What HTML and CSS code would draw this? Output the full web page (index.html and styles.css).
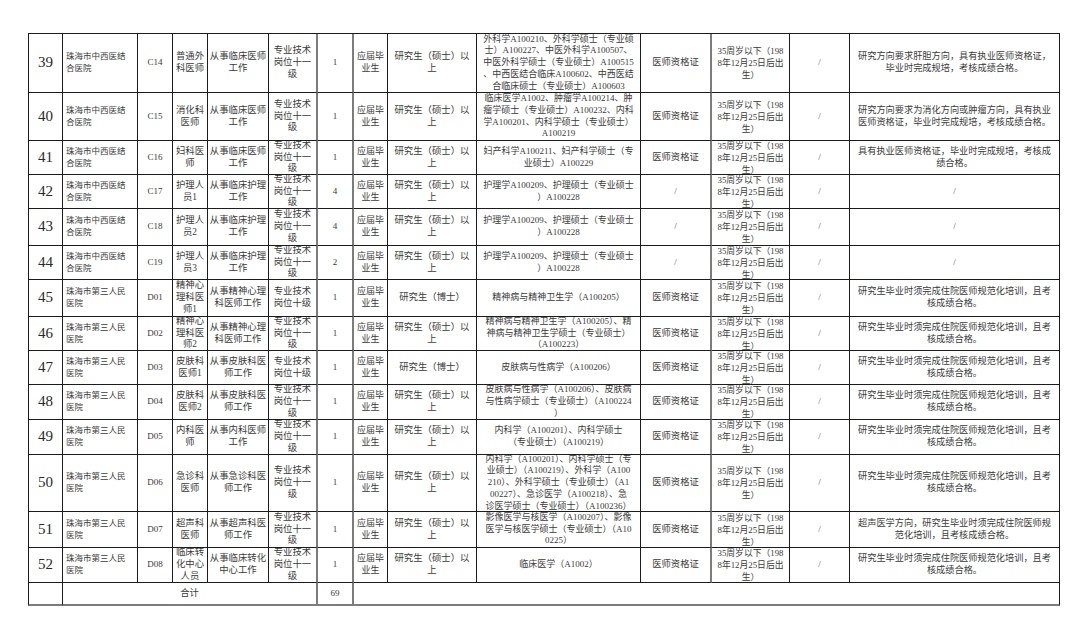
FILE: index.html
```html
<!DOCTYPE html>
<html lang="zh-CN">
<head>
<meta charset="utf-8">
<title>岗位表</title>
<link rel="stylesheet" href="styles.css">
</head>
<body>
<div class="sheet">
  <!-- 39 -->
  <div class="c n first">39</div>
  <div class="c u"><span>珠海市中西医结<br>合医院</span></div>
  <div class="c code">C14</div>
  <div class="c job"><span>普通外<br>科医师</span></div>
  <div class="c desc"><span>从事临床医师<br>工作</span></div>
  <div class="c post gr"><span>专业技术<br>岗位十一<br>级</span></div>
  <div class="c cnt gr">1</div>
  <div class="c grad"><span>应届毕<br>业生</span></div>
  <div class="c edu"><span>研究生（硕士）以<br>上</span></div>
  <div class="c m"><span>外科学A100210、外科学硕士（专业硕<br>士）A100227、中医外科学A100507、<br>中医外科学硕士（专业硕士）A100515<br>、中西医结合临床A100602、中西医结<br>合临床硕士（专业硕士）A100603</span></div>
  <div class="c cert gr">医师资格证</div>
  <div class="c age"><span>35周岁以下（198<br>8年12月25日后出<br>生）</span></div>
  <div class="c sl">/</div>
  <div class="c rm"><span>研究方向要求肝胆方向，具有执业医师资格证，<br>毕业时完成规培，考核成绩合格。</span></div>

  <!-- 40 -->
  <div class="c n first">40</div>
  <div class="c u"><span>珠海市中西医结<br>合医院</span></div>
  <div class="c code">C15</div>
  <div class="c job"><span>消化科<br>医师</span></div>
  <div class="c desc"><span>从事临床医师<br>工作</span></div>
  <div class="c post gr"><span>专业技术<br>岗位十一<br>级</span></div>
  <div class="c cnt gr">1</div>
  <div class="c grad"><span>应届毕<br>业生</span></div>
  <div class="c edu"><span>研究生（硕士）以<br>上</span></div>
  <div class="c m"><span>临床医学A1002、肿瘤学A100214、肿<br>瘤学硕士（专业硕士）A100232、内科<br>学A100201、内科学硕士（专业硕士）<br>A100219</span></div>
  <div class="c cert gr">医师资格证</div>
  <div class="c age"><span>35周岁以下（198<br>8年12月25日后出<br>生）</span></div>
  <div class="c sl">/</div>
  <div class="c rm"><span>研究方向要求为消化方向或肿瘤方向，具有执业<br>医师资格证，毕业时完成规培，考核成绩合格。</span></div>

  <!-- 41 -->
  <div class="c n first">41</div>
  <div class="c u"><span>珠海市中西医结<br>合医院</span></div>
  <div class="c code">C16</div>
  <div class="c job"><span>妇科医<br>师</span></div>
  <div class="c desc"><span>从事临床医师<br>工作</span></div>
  <div class="c post gr"><span>专业技术<br>岗位十一<br>级</span></div>
  <div class="c cnt gr">1</div>
  <div class="c grad"><span>应届毕<br>业生</span></div>
  <div class="c edu"><span>研究生（硕士）以<br>上</span></div>
  <div class="c m"><span>妇产科学A100211、妇产科学硕士（专<br>业硕士）A100229</span></div>
  <div class="c cert gr">医师资格证</div>
  <div class="c age"><span>35周岁以下（198<br>8年12月25日后出<br>生）</span></div>
  <div class="c sl">/</div>
  <div class="c rm"><span>具有执业医师资格证，毕业时完成规培，考核成<br>绩合格。</span></div>

  <!-- 42 -->
  <div class="c n first">42</div>
  <div class="c u"><span>珠海市中西医结<br>合医院</span></div>
  <div class="c code">C17</div>
  <div class="c job"><span>护理人<br>员1</span></div>
  <div class="c desc"><span>从事临床护理<br>工作</span></div>
  <div class="c post gr"><span>专业技术<br>岗位十一<br>级</span></div>
  <div class="c cnt gr">4</div>
  <div class="c grad"><span>应届毕<br>业生</span></div>
  <div class="c edu"><span>研究生（硕士）以<br>上</span></div>
  <div class="c m"><span>护理学A100209、护理硕士（专业硕士<br>）A100228</span></div>
  <div class="c cert sl gr">/</div>
  <div class="c age"><span>35周岁以下（198<br>8年12月25日后出<br>生）</span></div>
  <div class="c sl">/</div>
  <div class="c sl">/</div>

  <!-- 43 -->
  <div class="c n first">43</div>
  <div class="c u"><span>珠海市中西医结<br>合医院</span></div>
  <div class="c code">C18</div>
  <div class="c job"><span>护理人<br>员2</span></div>
  <div class="c desc"><span>从事临床护理<br>工作</span></div>
  <div class="c post gr"><span>专业技术<br>岗位十一<br>级</span></div>
  <div class="c cnt gr">4</div>
  <div class="c grad"><span>应届毕<br>业生</span></div>
  <div class="c edu"><span>研究生（硕士）以<br>上</span></div>
  <div class="c m"><span>护理学A100209、护理硕士（专业硕士<br>）A100228</span></div>
  <div class="c cert sl gr">/</div>
  <div class="c age"><span>35周岁以下（198<br>8年12月25日后出<br>生）</span></div>
  <div class="c sl">/</div>
  <div class="c sl">/</div>

  <!-- 44 -->
  <div class="c n first">44</div>
  <div class="c u"><span>珠海市中西医结<br>合医院</span></div>
  <div class="c code">C19</div>
  <div class="c job"><span>护理人<br>员3</span></div>
  <div class="c desc"><span>从事临床护理<br>工作</span></div>
  <div class="c post gr"><span>专业技术<br>岗位十一<br>级</span></div>
  <div class="c cnt gr">2</div>
  <div class="c grad"><span>应届毕<br>业生</span></div>
  <div class="c edu"><span>研究生（硕士）以<br>上</span></div>
  <div class="c m"><span>护理学A100209、护理硕士（专业硕士<br>）A100228</span></div>
  <div class="c cert sl gr">/</div>
  <div class="c age"><span>35周岁以下（198<br>8年12月25日后出<br>生）</span></div>
  <div class="c sl">/</div>
  <div class="c sl">/</div>

  <!-- 45 -->
  <div class="c n first">45</div>
  <div class="c u"><span>珠海市第三人民<br>医院</span></div>
  <div class="c code">D01</div>
  <div class="c job"><span>精神心<br>理科医<br>师1</span></div>
  <div class="c desc"><span>从事精神心理<br>科医师工作</span></div>
  <div class="c post gr"><span>专业技术<br>岗位十级</span></div>
  <div class="c cnt gr">1</div>
  <div class="c grad"><span>应届毕<br>业生</span></div>
  <div class="c edu">研究生（博士）</div>
  <div class="c m">精神病与精神卫生学（A100205）</div>
  <div class="c cert gr">医师资格证</div>
  <div class="c age"><span>35周岁以下（198<br>8年12月25日后出<br>生）</span></div>
  <div class="c sl">/</div>
  <div class="c rm"><span>研究生毕业时须完成住院医师规范化培训，且考<br>核成绩合格。</span></div>

  <!-- 46 -->
  <div class="c n first">46</div>
  <div class="c u"><span>珠海市第三人民<br>医院</span></div>
  <div class="c code">D02</div>
  <div class="c job"><span>精神心<br>理科医<br>师2</span></div>
  <div class="c desc"><span>从事精神心理<br>科医师工作</span></div>
  <div class="c post gr"><span>专业技术<br>岗位十一<br>级</span></div>
  <div class="c cnt gr">1</div>
  <div class="c grad"><span>应届毕<br>业生</span></div>
  <div class="c edu"><span>研究生（硕士）以<br>上</span></div>
  <div class="c m"><span>精神病与精神卫生学（A100205）、精<br>神病与精神卫生学硕士（专业硕士）<br>（A100223）</span></div>
  <div class="c cert gr">医师资格证</div>
  <div class="c age"><span>35周岁以下（198<br>8年12月25日后出<br>生）</span></div>
  <div class="c sl">/</div>
  <div class="c rm"><span>研究生毕业时须完成住院医师规范化培训，且考<br>核成绩合格。</span></div>

  <!-- 47 -->
  <div class="c n first">47</div>
  <div class="c u"><span>珠海市第三人民<br>医院</span></div>
  <div class="c code">D03</div>
  <div class="c job"><span>皮肤科<br>医师1</span></div>
  <div class="c desc"><span>从事皮肤科医<br>师工作</span></div>
  <div class="c post gr"><span>专业技术<br>岗位十级</span></div>
  <div class="c cnt gr">1</div>
  <div class="c grad"><span>应届毕<br>业生</span></div>
  <div class="c edu">研究生（博士）</div>
  <div class="c m">皮肤病与性病学（A100206）</div>
  <div class="c cert gr">医师资格证</div>
  <div class="c age"><span>35周岁以下（198<br>8年12月25日后出<br>生）</span></div>
  <div class="c sl">/</div>
  <div class="c rm"><span>研究生毕业时须完成住院医师规范化培训，且考<br>核成绩合格。</span></div>

  <!-- 48 -->
  <div class="c n first">48</div>
  <div class="c u"><span>珠海市第三人民<br>医院</span></div>
  <div class="c code">D04</div>
  <div class="c job"><span>皮肤科<br>医师2</span></div>
  <div class="c desc"><span>从事皮肤科医<br>师工作</span></div>
  <div class="c post gr"><span>专业技术<br>岗位十一<br>级</span></div>
  <div class="c cnt gr">1</div>
  <div class="c grad"><span>应届毕<br>业生</span></div>
  <div class="c edu"><span>研究生（硕士）以<br>上</span></div>
  <div class="c m"><span>皮肤病与性病学（A100206）、皮肤病<br>与性病学硕士（专业硕士）（A100224<br>）</span></div>
  <div class="c cert gr">医师资格证</div>
  <div class="c age"><span>35周岁以下（198<br>8年12月25日后出<br>生）</span></div>
  <div class="c sl">/</div>
  <div class="c rm"><span>研究生毕业时须完成住院医师规范化培训，且考<br>核成绩合格。</span></div>

  <!-- 49 -->
  <div class="c n first">49</div>
  <div class="c u"><span>珠海市第三人民<br>医院</span></div>
  <div class="c code">D05</div>
  <div class="c job"><span>内科医<br>师</span></div>
  <div class="c desc"><span>从事内科医师<br>工作</span></div>
  <div class="c post gr"><span>专业技术<br>岗位十一<br>级</span></div>
  <div class="c cnt gr">1</div>
  <div class="c grad"><span>应届毕<br>业生</span></div>
  <div class="c edu"><span>研究生（硕士）以<br>上</span></div>
  <div class="c m"><span>内科学（A100201）、内科学硕士<br>（专业硕士）（A100219）</span></div>
  <div class="c cert gr">医师资格证</div>
  <div class="c age"><span>35周岁以下（198<br>8年12月25日后出<br>生）</span></div>
  <div class="c sl">/</div>
  <div class="c rm"><span>研究生毕业时须完成住院医师规范化培训，且考<br>核成绩合格。</span></div>

  <!-- 50 -->
  <div class="c n first">50</div>
  <div class="c u"><span>珠海市第三人民<br>医院</span></div>
  <div class="c code">D06</div>
  <div class="c job"><span>急诊科<br>医师</span></div>
  <div class="c desc"><span>从事急诊科医<br>师工作</span></div>
  <div class="c post gr"><span>专业技术<br>岗位十一<br>级</span></div>
  <div class="c cnt gr">1</div>
  <div class="c grad"><span>应届毕<br>业生</span></div>
  <div class="c edu"><span>研究生（硕士）以<br>上</span></div>
  <div class="c m"><span>内科学（A100201）、内科学硕士（专<br>业硕士）（A100219）、外科学（A100<br>210）、外科学硕士（专业硕士）（A1<br>00227）、急诊医学（A100218）、急<br>诊医学硕士（专业硕士）（A100236）</span></div>
  <div class="c cert gr">医师资格证</div>
  <div class="c age"><span>35周岁以下（198<br>8年12月25日后出<br>生）</span></div>
  <div class="c sl">/</div>
  <div class="c rm"><span>研究生毕业时须完成住院医师规范化培训，且考<br>核成绩合格。</span></div>

  <!-- 51 -->
  <div class="c n first">51</div>
  <div class="c u"><span>珠海市第三人民<br>医院</span></div>
  <div class="c code">D07</div>
  <div class="c job"><span>超声科<br>医师</span></div>
  <div class="c desc"><span>从事超声科医<br>师工作</span></div>
  <div class="c post gr"><span>专业技术<br>岗位十一<br>级</span></div>
  <div class="c cnt gr">1</div>
  <div class="c grad"><span>应届毕<br>业生</span></div>
  <div class="c edu"><span>研究生（硕士）以<br>上</span></div>
  <div class="c m"><span>影像医学与核医学（A100207）、影像<br>医学与核医学硕士（专业硕士）（A10<br>0225）</span></div>
  <div class="c cert gr">医师资格证</div>
  <div class="c age"><span>35周岁以下（198<br>8年12月25日后出<br>生）</span></div>
  <div class="c sl">/</div>
  <div class="c rm"><span>超声医学方向，研究生毕业时须完成住院医师规<br>范化培训，且考核成绩合格。</span></div>

  <!-- 52 -->
  <div class="c n first">52</div>
  <div class="c u"><span>珠海市第三人民<br>医院</span></div>
  <div class="c code">D08</div>
  <div class="c job"><span>临床转<br>化中心<br>人员</span></div>
  <div class="c desc"><span>从事临床转化<br>中心工作</span></div>
  <div class="c post gr"><span>专业技术<br>岗位十一<br>级</span></div>
  <div class="c cnt gr">1</div>
  <div class="c grad"><span>应届毕<br>业生</span></div>
  <div class="c edu"><span>研究生（硕士）以<br>上</span></div>
  <div class="c m">临床医学（A1002）</div>
  <div class="c cert gr">医师资格证</div>
  <div class="c age"><span>35周岁以下（198<br>8年12月25日后出<br>生）</span></div>
  <div class="c sl">/</div>
  <div class="c rm"><span>研究生毕业时须完成住院医师规范化培训，且考<br>核成绩合格。</span></div>

  <!-- total -->
  <div class="c first last"></div>
  <div class="c total last span5 gr">合计</div>
  <div class="c cnt last gr">69</div>
  <div class="c last span7"></div>
</div>
</body>
</html>
```

FILE: styles.css
```css
html, body {
  margin: 0;
  padding: 0;
  background: #ffffff;
}

.sheet {
  display: grid;
  grid-template-columns: 35px 75px 35px 35px 61px 49px 36px 34px 89px 164px 71px 78px 60px 210px;
  grid-template-rows: 59px 48px 34px 34px 37px 34px 37px 34px 34px 35px 35px 57px 36px 35px 23px;
  width: max-content;
  margin: 33px 0 0 28px;
  border-top: 1px solid #1c1c1c;
  font-family: "Liberation Serif", "Noto Sans CJK SC", serif;
  font-weight: 400;
  color: #3a3a3a;
}

.c {
  box-sizing: border-box;
  border-right: 1px solid #1c1c1c;
  border-bottom: 1px solid #1c1c1c;
  display: flex;
  align-items: center;
  justify-content: center;
  text-align: center;
  overflow: hidden;
  white-space: nowrap;
  font-size: 9.3px;
  line-height: 11.7px;
}

.c > span {
  display: block;
}

.first {
  border-left: 1px solid #1c1c1c;
}

.gr {
  border-right: 2px solid #7c7c7c;
}

.n {
  font-size: 15px;
  color: #2a2a2a;
}

.u {
  justify-content: flex-start;
  text-align: left;
  padding-left: 3px;
  font-size: 8.5px;
}

.code {
  font-size: 9px;
}

.job,
.desc,
.post,
.edu {
  font-size: 9.4px;
}

.cnt,
.grad {
  font-size: 9px;
}

.m {
  font-size: 9px;
}

.cert {
  font-size: 9.3px;
}

.age {
  font-size: 8.8px;
  line-height: 12px;
}

.sl {
  font-size: 9px;
  color: #555555;
}

.rm {
  font-size: 9.2px;
}

.total {
  font-size: 9.3px;
}

.span5 {
  grid-column: span 5;
}

.span7 {
  grid-column: span 7;
}

.last {
  border-bottom: 2px solid #7c7c7c;
}
```
